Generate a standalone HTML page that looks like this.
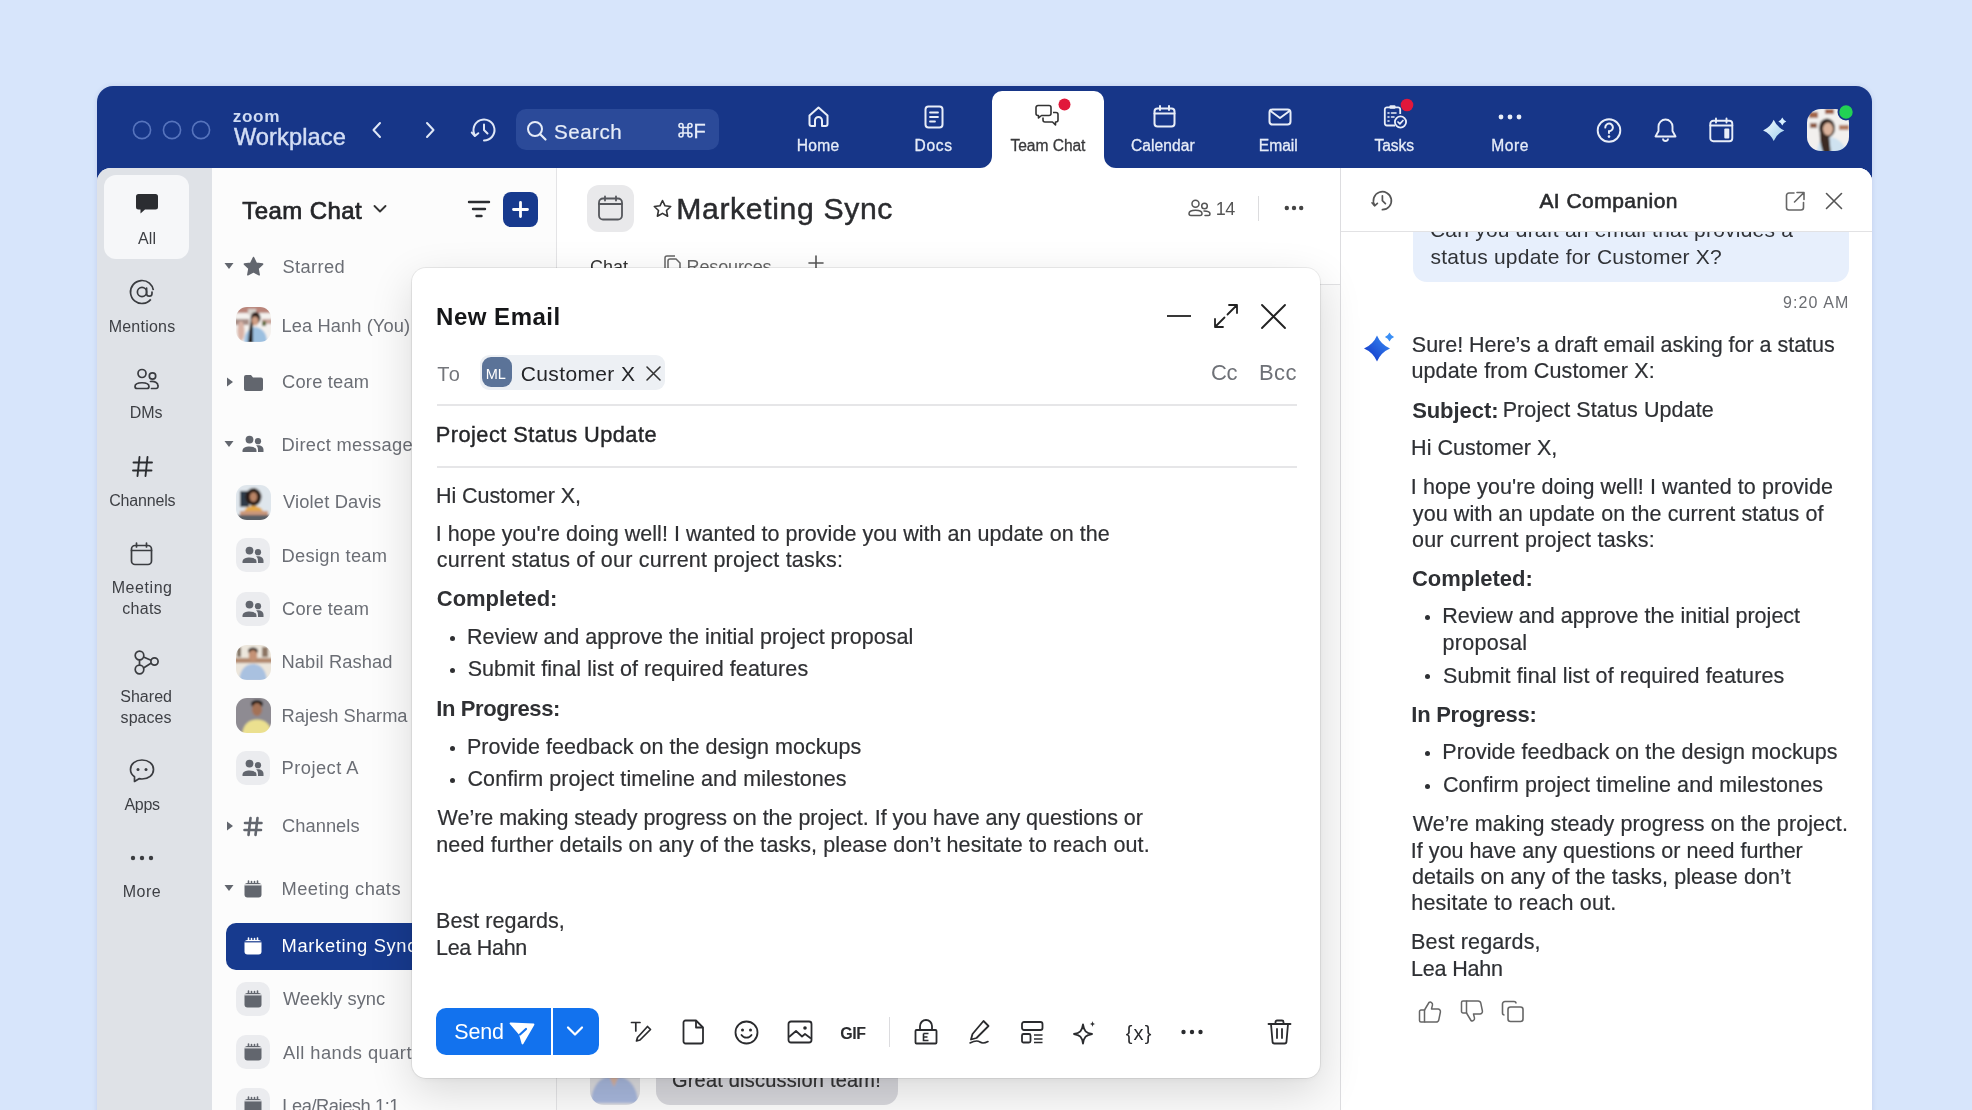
<!DOCTYPE html><html><head><meta charset="utf-8"><style>
html,body{margin:0;padding:0;}
body{width:1972px;height:1110px;overflow:hidden;position:relative;background:#d7e5fb;font-family:"Liberation Sans",sans-serif;}
.t{position:absolute;white-space:nowrap;line-height:1;-webkit-font-smoothing:antialiased;}
#root{position:absolute;left:0;top:0;width:1972px;height:1110px;will-change:transform;}
svg{display:block}
</style></head><body><div id="root">
<div style="position:absolute;left:97px;top:86px;width:1775px;height:1030px;background:#173688;border-radius:16px 16px 0 0;box-shadow:0 0 5px rgba(40,60,120,0.12);"></div>
<div style="position:absolute;left:97px;top:168px;width:1775px;height:950px;background:#ffffff;border-radius:14px 14px 0 0;overflow:hidden;"></div>
<svg style="position:absolute;left:132px;top:120px;overflow:visible;" width="20" height="20" viewBox="0 0 20 20" fill="none"><circle cx="10" cy="10" r="8.6" stroke="#5774bd" stroke-width="1.6"/></svg>
<svg style="position:absolute;left:161.5px;top:120px;overflow:visible;" width="20" height="20" viewBox="0 0 20 20" fill="none"><circle cx="10" cy="10" r="8.6" stroke="#5774bd" stroke-width="1.6"/></svg>
<svg style="position:absolute;left:191px;top:120px;overflow:visible;" width="20" height="20" viewBox="0 0 20 20" fill="none"><circle cx="10" cy="10" r="8.6" stroke="#5774bd" stroke-width="1.6"/></svg>
<div class="t" style="left:232.81px;top:107.64px;font-size:17.2px;color:#cfdbf3;font-weight:700;letter-spacing:0.609px;">zoom</div>
<div class="t" style="left:233.88px;top:125.72px;font-size:23.6px;color:#d3def5;letter-spacing:0.128px;-webkit-text-stroke:0.45px #d3def5;">Workplace</div>
<svg style="position:absolute;left:370px;top:121px;overflow:visible;" width="14" height="18" viewBox="0 0 14 18" fill="none"><path d="M10 2 L3.5 9 L10 16" stroke="#dfe7f6" stroke-width="2" stroke-linecap="round" stroke-linejoin="round"/></svg>
<svg style="position:absolute;left:423px;top:121px;overflow:visible;" width="14" height="18" viewBox="0 0 14 18" fill="none"><path d="M4 2 L10.5 9 L4 16" stroke="#dfe7f6" stroke-width="2" stroke-linecap="round" stroke-linejoin="round"/></svg>
<svg style="position:absolute;left:470px;top:117px;overflow:visible;" width="28" height="28" viewBox="0 0 28 28" fill="none"><path d="M4.9 18.25 A10.5 10.5 0 1 1 14 23.5" stroke="#dfe7f6" stroke-width="2" stroke-linecap="round"/><path d="M1.8 15.6 L4.9 19 L8.3 16.2" stroke="#dfe7f6" stroke-width="2" stroke-linecap="round" stroke-linejoin="round"/><path d="M14 7.5 V13 L17.5 16.5" stroke="#dfe7f6" stroke-width="2" stroke-linecap="round" stroke-linejoin="round"/></svg>
<div style="position:absolute;left:516px;top:109px;width:203px;height:41px;background:#2b4a99;border-radius:10px;"></div>
<svg style="position:absolute;left:526px;top:120px;overflow:visible;" width="22" height="22" viewBox="0 0 22 22" fill="none"><circle cx="9" cy="9" r="7" stroke="#e6ecf8" stroke-width="2"/><path d="M14 14 L19.5 19.5" stroke="#e6ecf8" stroke-width="2.2" stroke-linecap="round"/></svg>
<div class="t" style="left:554.07px;top:122.36px;font-size:20.6px;color:#e6ecf8;letter-spacing:0.473px;-webkit-text-stroke:0.2px #e6ecf8;">Search</div>
<svg style="position:absolute;left:677.5px;top:122px;overflow:visible;" width="15" height="17" viewBox="0 0 15 17" fill="none"><path d="M5 5.5 H10 V11 H5 Z M5 5.5 V3.5 A2 2 0 1 0 3 5.5 H5 M10 5.5 V3.5 A2 2 0 1 1 12 5.5 H10 M10 11 V13 A2 2 0 1 0 12 11 H10 M5 11 V13 A2 2 0 1 1 3 11 H5" stroke="#e6ecf8" stroke-width="1.6" fill="none"/></svg>
<div class="t" style="left:693.40px;top:121.07px;font-size:20px;color:#e6ecf8;-webkit-text-stroke:0.3px #e6ecf8;">F</div>
<svg style="position:absolute;left:980px;top:91px" width="136" height="78" viewBox="0 0 136 78"><path d="M0 77 A12 12 0 0 0 12 65 V10 A10 10 0 0 1 22 0 H114 A10 10 0 0 1 124 10 V65 A12 12 0 0 0 136 77 Z" fill="#ffffff"/></svg>
<svg style="position:absolute;left:807px;top:105px;overflow:visible;" width="23" height="23" viewBox="0 0 23 23" fill="none"><path d="M2.5 10.5 L11.5 2.5 L20.5 10.5 V19 A2 2 0 0 1 18.5 21 H15 V15.5 A3.5 3.5 0 0 0 8 15.5 V21 H4.5 A2 2 0 0 1 2.5 19 Z" stroke="#e9eef8" stroke-width="2" stroke-linejoin="round"/></svg>
<div class="t" style="left:796.75px;top:138.19px;font-size:15.6px;color:#e6ecf8;letter-spacing:0.299px;-webkit-text-stroke:0.3px #e6ecf8;">Home</div>
<svg style="position:absolute;left:924px;top:105px;overflow:visible;" width="21" height="24" viewBox="0 0 21 24" fill="none"><rect x="1.5" y="1.5" width="17" height="21" rx="3" stroke="#e9eef8" stroke-width="2"/><path d="M6 7.5 H14 M6 12 H14 M6 16.5 H11" stroke="#e9eef8" stroke-width="1.8" stroke-linecap="round"/></svg>
<div class="t" style="left:914.55px;top:138.19px;font-size:15.6px;color:#e6ecf8;letter-spacing:0.642px;-webkit-text-stroke:0.3px #e6ecf8;">Docs</div>
<svg style="position:absolute;left:1035px;top:104px;overflow:visible;" width="26" height="25" viewBox="0 0 26 25" fill="none"><path d="M3 1.5 H14 A2 2 0 0 1 16 3.5 V9.5 A2 2 0 0 1 14 11.5 H6.5 L3.5 14 V11.5 H3 A2 2 0 0 1 1 9.5 V3.5 A2 2 0 0 1 3 1.5 Z" stroke="#333" stroke-width="1.6" stroke-linejoin="round"/><path d="M18 8.5 H21 A2 2 0 0 1 23 10.5 V16 A2 2 0 0 1 21 18 H20.5 V21 L17.5 18 H10 A2 2 0 0 1 8 16 V13.5" stroke="#333" stroke-width="1.6" stroke-linejoin="round"/></svg>
<svg style="position:absolute;left:1058px;top:98px;overflow:visible;" width="13" height="13" viewBox="0 0 13 13" fill="none"><circle cx="6.5" cy="6.5" r="6" fill="#e1183b"/></svg>
<div class="t" style="left:1010.49px;top:138.19px;font-size:15.6px;color:#3a3a3c;letter-spacing:-0.054px;-webkit-text-stroke:0.3px #3a3a3c;">Team Chat</div>
<svg style="position:absolute;left:1153px;top:105px;overflow:visible;" width="23" height="23" viewBox="0 0 23 23" fill="none"><rect x="1.5" y="3.5" width="20" height="18" rx="3" stroke="#e9eef8" stroke-width="2"/><path d="M1.5 8.5 H21.5 M7 1 V5 M16 1 V5" stroke="#e9eef8" stroke-width="2" stroke-linecap="round"/></svg>
<div class="t" style="left:1130.92px;top:138.19px;font-size:15.6px;color:#e6ecf8;letter-spacing:0.068px;-webkit-text-stroke:0.3px #e6ecf8;">Calendar</div>
<svg style="position:absolute;left:1268px;top:108px;overflow:visible;" width="24" height="18" viewBox="0 0 24 18" fill="none"><rect x="1.5" y="1.5" width="21" height="15" rx="3" stroke="#e9eef8" stroke-width="2"/><path d="M2.5 3 L12 10 L21.5 3" stroke="#e9eef8" stroke-width="2" stroke-linejoin="round"/></svg>
<div class="t" style="left:1258.75px;top:138.19px;font-size:15.6px;color:#e6ecf8;-webkit-text-stroke:0.3px #e6ecf8;">Email</div>
<svg style="position:absolute;left:1383px;top:104px;overflow:visible;" width="25" height="26" viewBox="0 0 25 26" fill="none"><path d="M12 21.5 H4 A2.2 2.2 0 0 1 1.8 19.3 V5.5 A2.2 2.2 0 0 1 4 3.3 H15 A2.2 2.2 0 0 1 17.2 5.5 V10" stroke="#e9eef8" stroke-width="1.8"/><rect x="6.5" y="1.2" width="6" height="3.6" rx="1" fill="#e9eef8"/><path d="M5 9 H6 M8.5 9 H13 M5 13 H6 M8.5 13 H11 M5 17 H6" stroke="#e9eef8" stroke-width="1.6" stroke-linecap="round"/><circle cx="17.5" cy="18" r="5.6" stroke="#e9eef8" stroke-width="1.8"/><path d="M15 18 L16.9 19.8 L20 16.5" stroke="#e9eef8" stroke-width="1.7" stroke-linecap="round" stroke-linejoin="round"/></svg>
<svg style="position:absolute;left:1400px;top:98px;overflow:visible;" width="14" height="14" viewBox="0 0 14 14" fill="none"><circle cx="7" cy="7" r="6.3" fill="#e1183b"/></svg>
<div class="t" style="left:1374.49px;top:138.19px;font-size:15.6px;color:#e6ecf8;letter-spacing:-0.050px;-webkit-text-stroke:0.3px #e6ecf8;">Tasks</div>
<svg style="position:absolute;left:1498px;top:112px;overflow:visible;" width="24" height="10" viewBox="0 0 24 10" fill="none"><circle cx="3" cy="5" r="2.4" fill="#e9eef8"/><circle cx="12" cy="5" r="2.4" fill="#e9eef8"/><circle cx="21" cy="5" r="2.4" fill="#e9eef8"/></svg>
<div class="t" style="left:1491.15px;top:138.19px;font-size:15.6px;color:#e6ecf8;letter-spacing:0.594px;-webkit-text-stroke:0.3px #e6ecf8;">More</div>
<svg style="position:absolute;left:1596px;top:118px;overflow:visible;" width="26" height="26" viewBox="0 0 26 26" fill="none"><circle cx="13" cy="12.5" r="11.3" stroke="#e9eef8" stroke-width="1.9"/><path d="M9.3 9.6 A3.8 3.8 0 1 1 13 13.2 V15" stroke="#e9eef8" stroke-width="2" stroke-linecap="round"/><circle cx="13" cy="18.6" r="1.3" fill="#e9eef8"/></svg>
<svg style="position:absolute;left:1653px;top:117px;overflow:visible;" width="25" height="26" viewBox="0 0 25 26" fill="none"><path d="M12.5 2.5 A7 7 0 0 0 5.5 9.5 V14 L2.5 19.5 H22.5 L19.5 14 V9.5 A7 7 0 0 0 12.5 2.5 Z" stroke="#e9eef8" stroke-width="1.9" stroke-linejoin="round"/><path d="M10 21.5 A2.5 2.5 0 0 0 15 21.5" stroke="#e9eef8" stroke-width="1.9"/></svg>
<svg style="position:absolute;left:1709px;top:118px;overflow:visible;" width="25" height="25" viewBox="0 0 25 25" fill="none"><rect x="1.3" y="2.8" width="22" height="20.5" rx="3" stroke="#e9eef8" stroke-width="1.9"/><path d="M1.3 7.5 H23.3 M7 0.5 V4.5 M17.5 0.5 V4.5" stroke="#e9eef8" stroke-width="1.9" stroke-linecap="round"/><rect x="15.3" y="10.5" width="5" height="10" rx="1" fill="#e9eef8"/></svg>
<svg style="position:absolute;left:1760px;top:115px;overflow:visible;" width="30" height="30" viewBox="0 0 30 30" fill="none"><defs><linearGradient id="spg" x1="0" y1="0" x2="1" y2="1"><stop offset="0" stop-color="#f4fbff"/><stop offset="1" stop-color="#9fd0ee"/></linearGradient></defs><path d="M13.7 4.800000000000001 Q16.88 12.22 24.299999999999997 15.4 Q16.88 18.58 13.7 26.0 Q10.52 18.58 3.0999999999999996 15.4 Q10.52 12.22 13.7 4.800000000000001 Z" fill="url(#spg)"/><path d="M22.3 2.5999999999999996 Q23.50 5.40 26.3 6.6 Q23.50 7.80 22.3 10.6 Q21.10 7.80 18.3 6.6 Q21.10 5.40 22.3 2.5999999999999996 Z" fill="#d6efff"/></svg>
<svg style="position:absolute;left:1807px;top:109px" width="42" height="42" viewBox="0 0 42 42"><defs><clipPath id="hav"><rect width="42" height="42" rx="14"/></clipPath><filter id="havf"><feGaussianBlur stdDeviation="0.9"/></filter></defs><g clip-path="url(#hav)"><g filter="url(#havf)"><rect x="-3" y="-3" width="48" height="48" fill="#f2f0ee"/><rect x="2" y="3" width="9" height="6" fill="#a3654a"/><rect x="18" y="0" width="9" height="5" fill="#9c5d42"/><rect x="3" y="14" width="7" height="5" fill="#8d5a43"/><rect x="32" y="16" width="10" height="5" fill="#b07a5e"/><path d="M10 46 C10 33 14 29 22 28 C32 29 38 35 40 46 Z" fill="#cfe2f0"/><ellipse cx="20" cy="19" rx="8" ry="9.5" fill="#2a1d17"/><path d="M13 22 C12 32 15 40 17 46 L24 46 L22 26 Z" fill="#3a2a22"/><ellipse cx="21" cy="20" rx="5" ry="6.5" fill="#dcb49c"/></g></g></svg>
<svg style="position:absolute;left:1837px;top:103px;overflow:visible;" width="18" height="18" viewBox="0 0 18 18" fill="none"><circle cx="9" cy="9" r="7.6" fill="#22d254" stroke="#173688" stroke-width="1.8"/></svg>
<div style="position:absolute;left:97px;top:168px;width:115px;height:950px;background:#dfe2e7;border-top-left-radius:14px;"></div>
<div style="position:absolute;left:104px;top:175px;width:85px;height:84px;background:#f6f7f9;border-radius:12px;"></div>
<svg style="position:absolute;left:135px;top:193px;overflow:visible;" width="24" height="22" viewBox="0 0 24 22" fill="none"><path d="M3.5 1 H20.5 A2.5 2.5 0 0 1 23 3.5 V14 A2.5 2.5 0 0 1 20.5 16.5 H10 L5.5 20.5 V16.5 H3.5 A2.5 2.5 0 0 1 1 14 V3.5 A2.5 2.5 0 0 1 3.5 1 Z" fill="#2b2d31"/></svg>
<div class="t" style="left:138.00px;top:231.46px;font-size:16px;color:#3d3f44;letter-spacing:0.140px;">All</div>
<svg style="position:absolute;left:129px;top:279px;overflow:visible;" width="26" height="26" viewBox="0 0 26 26" fill="none"><circle cx="13" cy="13" r="11.5" stroke="#3a3c40" stroke-width="1.7" stroke-dasharray="62 12" transform="rotate(40 13 13)"/><circle cx="13" cy="13" r="4.6" stroke="#3a3c40" stroke-width="1.7"/><path d="M17.6 9 V14.5 A2.6 2.6 0 0 0 23 14.5 V13" stroke="#3a3c40" stroke-width="1.7" stroke-linecap="round"/></svg>
<div class="t" style="left:108.67px;top:318.66px;font-size:16px;color:#3d3f44;letter-spacing:0.226px;">Mentions</div>
<svg style="position:absolute;left:133px;top:368px;overflow:visible;" width="27" height="23" viewBox="0 0 27 23" fill="none"><circle cx="9" cy="5.5" r="4" stroke="#3a3c40" stroke-width="1.7"/><circle cx="19.5" cy="8" r="3.2" stroke="#3a3c40" stroke-width="1.7"/><path d="M2 18.5 C2 13.5 16 13.5 16 18.5 A2 2 0 0 1 14 20.5 H4 A2 2 0 0 1 2 18.5 Z" stroke="#3a3c40" stroke-width="1.7"/><path d="M17.5 13.5 C21.5 13 25 14.5 25 18 A2 2 0 0 1 23 20.5 H18.5" stroke="#3a3c40" stroke-width="1.7" stroke-linecap="round"/></svg>
<div class="t" style="left:129.72px;top:405.26px;font-size:16px;color:#3d3f44;letter-spacing:-0.020px;">DMs</div>
<svg style="position:absolute;left:131px;top:455px;overflow:visible;" width="23" height="23" viewBox="0 0 23 23" fill="none"><path d="M8.5 2 L6.5 21 M16.5 2 L14.5 21 M2.5 7.5 H21 M2 15.5 H20.5" stroke="#2b2d31" stroke-width="1.9" stroke-linecap="round"/></svg>
<div class="t" style="left:109.20px;top:492.66px;font-size:16px;color:#3d3f44;letter-spacing:-0.177px;">Channels</div>
<svg style="position:absolute;left:130px;top:542px;overflow:visible;" width="24" height="24" viewBox="0 0 24 24" fill="none"><rect x="1.5" y="3.5" width="20" height="19" rx="3.5" stroke="#3a3c40" stroke-width="1.7"/><path d="M1.5 8.5 H21.5 M6.5 1 V5 M16.5 1 V5" stroke="#3a3c40" stroke-width="1.7" stroke-linecap="round"/></svg>
<div class="t" style="left:111.72px;top:579.66px;font-size:16px;color:#3d3f44;letter-spacing:0.560px;">Meeting</div>
<div class="t" style="left:122.36px;top:600.66px;font-size:16px;color:#3d3f44;letter-spacing:0.240px;">chats</div>
<svg style="position:absolute;left:133px;top:649px;overflow:visible;" width="27" height="27" viewBox="0 0 27 27" fill="none"><circle cx="6.5" cy="6.5" r="4.3" stroke="#3a3c40" stroke-width="1.7"/><circle cx="6.5" cy="20.5" r="4.3" stroke="#3a3c40" stroke-width="1.7"/><circle cx="21.5" cy="12.5" r="3.6" stroke="#3a3c40" stroke-width="1.7"/><path d="M10.5 8 L18 11.3 M10.5 19 L18.3 14 M6.5 10.8 V16.2" stroke="#3a3c40" stroke-width="1.7"/></svg>
<div class="t" style="left:120.28px;top:688.66px;font-size:16px;color:#3d3f44;letter-spacing:0.016px;">Shared</div>
<div class="t" style="left:120.60px;top:709.66px;font-size:16px;color:#3d3f44;letter-spacing:0.048px;">spaces</div>
<svg style="position:absolute;left:129px;top:758px;overflow:visible;" width="26" height="26" viewBox="0 0 26 26" fill="none"><path d="M13 2 C6.5 2 1.5 6 1.5 11.5 C1.5 14.5 3 17 5.5 18.7 V23.5 L10 20.7 C11 20.9 12 21 13 21 C19.5 21 24.5 17 24.5 11.5 C24.5 6 19.5 2 13 2 Z" stroke="#3a3c40" stroke-width="1.7" stroke-linejoin="round"/><circle cx="9" cy="11.5" r="1.5" fill="#3a3c40"/><circle cx="17" cy="11.5" r="1.5" fill="#3a3c40"/></svg>
<div class="t" style="left:124.50px;top:797.06px;font-size:16px;color:#3d3f44;letter-spacing:-0.307px;">Apps</div>
<svg style="position:absolute;left:130px;top:853px;overflow:visible;" width="24" height="10" viewBox="0 0 24 10" fill="none"><circle cx="3" cy="5" r="2.2" fill="#3a3c40"/><circle cx="12" cy="5" r="2.2" fill="#3a3c40"/><circle cx="21" cy="5" r="2.2" fill="#3a3c40"/></svg>
<div class="t" style="left:122.72px;top:884.36px;font-size:16px;color:#3d3f44;letter-spacing:0.507px;">More</div>
<div style="position:absolute;left:212px;top:168px;width:345px;height:950px;background:#fcfcfc;"></div>
<div style="position:absolute;left:556px;top:168px;width:1px;height:950px;background:#e4e4e6;"></div>
<div class="t" style="left:242.22px;top:199.48px;font-size:24px;color:#242528;letter-spacing:0.420px;-webkit-text-stroke:0.7px #242528;">Team Chat</div>
<svg style="position:absolute;left:372px;top:203px;overflow:visible;" width="16" height="12" viewBox="0 0 16 12" fill="none"><path d="M2.5 3 L8 8.5 L13.5 3" stroke="#333" stroke-width="1.9" stroke-linecap="round" stroke-linejoin="round"/></svg>
<svg style="position:absolute;left:467px;top:199px;overflow:visible;" width="24" height="20" viewBox="0 0 24 20" fill="none"><path d="M2 3 H22 M6 10 H18 M9.5 17 H14.5" stroke="#2b2d31" stroke-width="2.4" stroke-linecap="round"/></svg>
<div style="position:absolute;left:503px;top:192px;width:35px;height:35px;background:#173a8e;border-radius:8px;"></div>
<svg style="position:absolute;left:510px;top:199px;overflow:visible;" width="21" height="21" viewBox="0 0 21 21" fill="none"><path d="M10.5 3.5 V17.5 M3.5 10.5 H17.5" stroke="#fff" stroke-width="2.8" stroke-linecap="round"/></svg>
<svg style="position:absolute;left:223px;top:261px;overflow:visible;" width="12" height="10" viewBox="0 0 12 10" fill="none"><path d="M1.5 2 H10.5 L6 8 Z" fill="#62666e"/></svg>
<svg style="position:absolute;left:243px;top:256px;overflow:visible;" width="21" height="21" viewBox="0 0 21 21" fill="none"><path d="M10.5 1.5 L13.3 7.3 L19.6 8.1 L15 12.5 L16.2 18.8 L10.5 15.8 L4.8 18.8 L6 12.5 L1.4 8.1 L7.7 7.3 Z" fill="#62666e" stroke="#62666e" stroke-width="1.5" stroke-linejoin="round"/></svg>
<div class="t" style="left:282.48px;top:258.01px;font-size:18.3px;color:#6b6e75;letter-spacing:0.383px;">Starred</div>
<svg style="position:absolute;left:236px;top:307px" width="35" height="35" viewBox="0 0 35 35"><defs><clipPath id="avc1"><rect width="35" height="35" rx="11"/></clipPath><filter id="avf1" x="-20%" y="-20%" width="140%" height="140%"><feGaussianBlur stdDeviation="0.9"/></filter></defs><g clip-path="url(#avc1)"><g filter="url(#avf1)"><rect x="-3" y="-3" width="41" height="41" fill="#f4f1ee"/><rect x="-3" y="-3" width="41" height="9" fill="#b9857a"/><rect x="12" y="2" width="8" height="6" fill="#d9d3cd"/><rect x="-3" y="12" width="16" height="6" fill="#a88f88"/><rect x="26" y="12" width="12" height="5" fill="#c9a59b"/><ellipse cx="5" cy="24" rx="3.5" ry="10" fill="#d9b3a6"/><ellipse cx="19.5" cy="11" rx="5" ry="6" fill="#2a1d18"/><ellipse cx="19" cy="14" rx="3.6" ry="4.6" fill="#cf9e84"/><path d="M8 36 C8 24 14 21 19 20 C25 21 31 24 31 36 Z" fill="#9cc0e0"/><path d="M15 12 C13 20 13 28 12 36 L17 36 L17 18 Z" fill="#1f1613"/><rect x="26" y="14" width="4" height="5" fill="#5d6b3a"/></g></g></svg>
<div class="t" style="left:281.54px;top:316.51px;font-size:18.3px;color:#6b6e75;letter-spacing:0.085px;">Lea Hanh (You)</div>
<svg style="position:absolute;left:225px;top:376px;overflow:visible;" width="10" height="12" viewBox="0 0 10 12" fill="none"><path d="M2 1.5 V10.5 L8 6 Z" fill="#62666e"/></svg>
<svg style="position:absolute;left:243px;top:374px;overflow:visible;" width="21" height="18" viewBox="0 0 21 18" fill="none"><path d="M1 3 A2 2 0 0 1 3 1 H8 L10 3.5 H18 A2 2 0 0 1 20 5.5 V15 A2 2 0 0 1 18 17 H3 A2 2 0 0 1 1 15 Z" fill="#62666e"/></svg>
<div class="t" style="left:282.08px;top:373.01px;font-size:18.3px;color:#6b6e75;letter-spacing:0.205px;">Core team</div>
<svg style="position:absolute;left:223px;top:439px;overflow:visible;" width="12" height="10" viewBox="0 0 12 10" fill="none"><path d="M1.5 2 H10.5 L6 8 Z" fill="#62666e"/></svg>
<svg style="position:absolute;left:242px;top:435px;overflow:visible;" width="22" height="18" viewBox="0 0 22 18" fill="none"><circle cx="7.5" cy="4.6" r="3.9" fill="#62666e"/><circle cx="16" cy="6.2" r="3.1" fill="#62666e"/><path d="M0.5 15.5 C0.5 10 14.5 10 14.5 15.5 V17 H0.5 Z" fill="#62666e"/><path d="M15.5 10.2 C19.5 10.2 21.5 12 21.5 15 V17 H16 V15.5 C16 13 15.5 11.5 14 10.6 Z" fill="#62666e"/></svg>
<div class="t" style="left:281.54px;top:436.01px;font-size:18.3px;color:#6b6e75;letter-spacing:0.316px;">Direct message</div>
<svg style="position:absolute;left:236px;top:485px" width="35" height="35" viewBox="0 0 35 35"><defs><clipPath id="avc2"><rect width="35" height="35" rx="11"/></clipPath><filter id="avf2" x="-20%" y="-20%" width="140%" height="140%"><feGaussianBlur stdDeviation="0.9"/></filter></defs><g clip-path="url(#avc2)"><g filter="url(#avf2)"><rect x="-3" y="-3" width="41" height="41" fill="#dfe6ec"/><rect x="4" y="6" width="9" height="16" fill="#2f3b48"/><ellipse cx="17.5" cy="12" rx="8" ry="9" fill="#2a1c16"/><ellipse cx="17.5" cy="12" rx="3.6" ry="4.8" fill="#b98466"/><path d="M5 36 C6 25 11 21 17.5 21 C24 21 29 25 30 36 Z" fill="#e5a744"/><rect x="4" y="26" width="28" height="4" fill="#c9967a"/><rect x="-3" y="30" width="41" height="8" fill="#5a5f66"/></g></g></svg>
<div class="t" style="left:282.91px;top:493.01px;font-size:18.3px;color:#6b6e75;letter-spacing:0.189px;">Violet Davis</div>
<div style="position:absolute;left:236px;top:538px;width:34px;height:34px;background:#ebecef;border-radius:10px;"></div>
<svg style="position:absolute;left:242px;top:546px;overflow:visible;" width="22" height="18" viewBox="0 0 22 18" fill="none"><circle cx="7.5" cy="4.6" r="3.9" fill="#62666e"/><circle cx="16" cy="6.2" r="3.1" fill="#62666e"/><path d="M0.5 15.5 C0.5 10 14.5 10 14.5 15.5 V17 H0.5 Z" fill="#62666e"/><path d="M15.5 10.2 C19.5 10.2 21.5 12 21.5 15 V17 H16 V15.5 C16 13 15.5 11.5 14 10.6 Z" fill="#62666e"/></svg>
<div class="t" style="left:281.54px;top:546.61px;font-size:18.3px;color:#6b6e75;letter-spacing:0.290px;">Design team</div>
<div style="position:absolute;left:236px;top:592px;width:34px;height:34px;background:#ebecef;border-radius:10px;"></div>
<svg style="position:absolute;left:242px;top:600px;overflow:visible;" width="22" height="18" viewBox="0 0 22 18" fill="none"><circle cx="7.5" cy="4.6" r="3.9" fill="#62666e"/><circle cx="16" cy="6.2" r="3.1" fill="#62666e"/><path d="M0.5 15.5 C0.5 10 14.5 10 14.5 15.5 V17 H0.5 Z" fill="#62666e"/><path d="M15.5 10.2 C19.5 10.2 21.5 12 21.5 15 V17 H16 V15.5 C16 13 15.5 11.5 14 10.6 Z" fill="#62666e"/></svg>
<div class="t" style="left:282.08px;top:600.01px;font-size:18.3px;color:#6b6e75;letter-spacing:0.205px;">Core team</div>
<svg style="position:absolute;left:236px;top:645px" width="35" height="35" viewBox="0 0 35 35"><defs><clipPath id="avc3"><rect width="35" height="35" rx="11"/></clipPath><filter id="avf3" x="-20%" y="-20%" width="140%" height="140%"><feGaussianBlur stdDeviation="0.9"/></filter></defs><g clip-path="url(#avc3)"><g filter="url(#avf3)"><rect x="-3" y="-3" width="41" height="41" fill="#ece6dc"/><rect x="-3" y="13" width="41" height="5" fill="#b38b70"/><rect x="1" y="2" width="4" height="10" fill="#7a6a5c"/><rect x="26" y="2" width="6" height="10" fill="#8c7564"/><ellipse cx="17" cy="6" rx="5" ry="3.5" fill="#2b1f18"/><ellipse cx="17" cy="10.5" rx="4.3" ry="5.5" fill="#c59274"/><path d="M3 36 C4 24 10 19 17 19 C24 19 30 24 31 36 Z" fill="#a9c1e0"/></g></g></svg>
<div class="t" style="left:281.54px;top:653.01px;font-size:18.3px;color:#6b6e75;letter-spacing:0.106px;">Nabil Rashad</div>
<svg style="position:absolute;left:236px;top:698px" width="35" height="35" viewBox="0 0 35 35"><defs><clipPath id="avc4"><rect width="35" height="35" rx="11"/></clipPath><filter id="avf4" x="-20%" y="-20%" width="140%" height="140%"><feGaussianBlur stdDeviation="0.9"/></filter></defs><g clip-path="url(#avc4)"><g filter="url(#avf4)"><rect x="-3" y="-3" width="41" height="41" fill="#8e8b92"/><ellipse cx="21" cy="6" rx="6" ry="4" fill="#1d1612"/><ellipse cx="21" cy="11.5" rx="5" ry="6.5" fill="#a47257"/><path d="M6 37 C7 26 13 21.5 21 21.5 C29 21.5 35 26 36 37 Z" fill="#ebe08f"/></g></g></svg>
<div class="t" style="left:281.54px;top:706.61px;font-size:18.3px;color:#6b6e75;">Rajesh Sharma</div>
<div style="position:absolute;left:236px;top:751px;width:34px;height:34px;background:#ebecef;border-radius:10px;"></div>
<svg style="position:absolute;left:242px;top:759px;overflow:visible;" width="22" height="18" viewBox="0 0 22 18" fill="none"><circle cx="7.5" cy="4.6" r="3.9" fill="#62666e"/><circle cx="16" cy="6.2" r="3.1" fill="#62666e"/><path d="M0.5 15.5 C0.5 10 14.5 10 14.5 15.5 V17 H0.5 Z" fill="#62666e"/><path d="M15.5 10.2 C19.5 10.2 21.5 12 21.5 15 V17 H16 V15.5 C16 13 15.5 11.5 14 10.6 Z" fill="#62666e"/></svg>
<div class="t" style="left:281.54px;top:759.01px;font-size:18.3px;color:#6b6e75;letter-spacing:0.483px;">Project A</div>
<svg style="position:absolute;left:225px;top:820px;overflow:visible;" width="10" height="12" viewBox="0 0 10 12" fill="none"><path d="M2 1.5 V10.5 L8 6 Z" fill="#62666e"/></svg>
<svg style="position:absolute;left:243px;top:816px;overflow:visible;" width="20" height="21" viewBox="0 0 20 21" fill="none"><path d="M7.5 2 L5.5 19 M14.5 2 L12.5 19 M2 7 H18.5 M1.5 14 H18" stroke="#62666e" stroke-width="2.6" stroke-linecap="round"/></svg>
<div class="t" style="left:282.08px;top:817.01px;font-size:18.3px;color:#6b6e75;letter-spacing:0.034px;">Channels</div>
<svg style="position:absolute;left:223px;top:883px;overflow:visible;" width="12" height="10" viewBox="0 0 12 10" fill="none"><path d="M1.5 2 H10.5 L6 8 Z" fill="#62666e"/></svg>
<svg style="position:absolute;left:244px;top:880px;overflow:visible;" width="18" height="18" viewBox="0 0 18 18" fill="none"><rect x="0.5" y="3" width="17" height="14.5" rx="3" fill="#62666e"/><path d="M4.5 1 V4.5 M13.5 1 V4.5 M7.5 1.5 V3.5 M10.5 1.5 V3.5" stroke="#62666e" stroke-width="1.6" stroke-linecap="round"/><rect x="0.5" y="4.2" width="17" height="1.2" fill="#fcfcfc"/></svg>
<div class="t" style="left:281.54px;top:880.01px;font-size:18.3px;color:#6b6e75;letter-spacing:0.432px;">Meeting chats</div>
<div style="position:absolute;left:226px;top:923px;width:340px;height:47px;background:#173a8e;border-radius:10px;"></div>
<svg style="position:absolute;left:244px;top:937px;overflow:visible;" width="18" height="18" viewBox="0 0 18 18" fill="none"><rect x="0.5" y="3" width="17" height="14.5" rx="3" fill="#ffffff"/><path d="M4.5 1 V4.5 M13.5 1 V4.5 M7.5 1.5 V3.5 M10.5 1.5 V3.5" stroke="#ffffff" stroke-width="1.6" stroke-linecap="round"/><rect x="0.5" y="4.2" width="17" height="1.2" fill="#173a8e"/></svg>
<div class="t" style="left:281.54px;top:937.31px;font-size:18.3px;color:#ffffff;letter-spacing:0.680px;">Marketing Sync</div>
<div style="position:absolute;left:236px;top:982px;width:34px;height:34px;background:#ebecef;border-radius:10px;"></div>
<svg style="position:absolute;left:244px;top:990px;overflow:visible;" width="18" height="18" viewBox="0 0 18 18" fill="none"><rect x="0.5" y="3" width="17" height="14.5" rx="3" fill="#62666e"/><path d="M4.5 1 V4.5 M13.5 1 V4.5 M7.5 1.5 V3.5 M10.5 1.5 V3.5" stroke="#62666e" stroke-width="1.6" stroke-linecap="round"/><rect x="0.5" y="4.2" width="17" height="1.2" fill="#ebecef"/></svg>
<div class="t" style="left:282.91px;top:990.01px;font-size:18.3px;color:#6b6e75;">Weekly sync</div>
<div style="position:absolute;left:236px;top:1035px;width:34px;height:34px;background:#ebecef;border-radius:10px;"></div>
<svg style="position:absolute;left:244px;top:1043px;overflow:visible;" width="18" height="18" viewBox="0 0 18 18" fill="none"><rect x="0.5" y="3" width="17" height="14.5" rx="3" fill="#62666e"/><path d="M4.5 1 V4.5 M13.5 1 V4.5 M7.5 1.5 V3.5 M10.5 1.5 V3.5" stroke="#62666e" stroke-width="1.6" stroke-linecap="round"/><rect x="0.5" y="4.2" width="17" height="1.2" fill="#ebecef"/></svg>
<div class="t" style="left:283.00px;top:1043.61px;font-size:18.3px;color:#6b6e75;letter-spacing:0.466px;">All hands quarterly</div>
<div style="position:absolute;left:236px;top:1088px;width:34px;height:34px;background:#ebecef;border-radius:10px;"></div>
<svg style="position:absolute;left:244px;top:1096px;overflow:visible;" width="18" height="18" viewBox="0 0 18 18" fill="none"><rect x="0.5" y="3" width="17" height="14.5" rx="3" fill="#62666e"/><path d="M4.5 1 V4.5 M13.5 1 V4.5 M7.5 1.5 V3.5 M10.5 1.5 V3.5" stroke="#62666e" stroke-width="1.6" stroke-linecap="round"/><rect x="0.5" y="4.2" width="17" height="1.2" fill="#ebecef"/></svg>
<div class="t" style="left:282.24px;top:1097.01px;font-size:18.3px;color:#6b6e75;letter-spacing:-0.445px;">Lea/Rajesh 1:1</div>
<div style="position:absolute;left:557px;top:168px;width:783px;height:950px;background:#ffffff;"></div>
<div style="position:absolute;left:557px;top:284px;width:783px;height:830px;background:#fbfbfb;"></div>
<div style="position:absolute;left:557px;top:284px;width:783px;height:1px;background:#e2e2e4;"></div>
<div style="position:absolute;left:587px;top:185px;width:47px;height:47px;background:#e9e9eb;border-radius:12px;"></div>
<svg style="position:absolute;left:597px;top:195px;overflow:visible;" width="27" height="27" viewBox="0 0 27 27" fill="none"><rect x="2" y="3.5" width="23" height="21" rx="4" stroke="#55575c" stroke-width="1.8"/><path d="M2 9 H25 M8 1.5 V5.5 M19 1.5 V5.5" stroke="#55575c" stroke-width="1.8" stroke-linecap="round"/></svg>
<svg style="position:absolute;left:653px;top:199px;overflow:visible;" width="19" height="19" viewBox="0 0 19 19" fill="none"><path d="M9.5 1.5 L12 6.8 L17.7 7.5 L13.5 11.5 L14.6 17.2 L9.5 14.4 L4.4 17.2 L5.5 11.5 L1.3 7.5 L7 6.8 Z" stroke="#333" stroke-width="1.6" stroke-linejoin="round"/></svg>
<div class="t" style="left:676.28px;top:193.54px;font-size:30.2px;color:#2a2b2e;letter-spacing:0.623px;-webkit-text-stroke:0.45px #2a2b2e;">Marketing Sync</div>
<svg style="position:absolute;left:1188px;top:199px;overflow:visible;" width="23" height="18" viewBox="0 0 23 18" fill="none"><circle cx="7.5" cy="4.8" r="3.5" stroke="#555" stroke-width="1.5"/><circle cx="16.5" cy="7" r="2.8" stroke="#555" stroke-width="1.5"/><path d="M1 14.5 C1 10 14 10 14 14.5 A2 2 0 0 1 12 16.5 H3 A2 2 0 0 1 1 14.5 Z" stroke="#555" stroke-width="1.5"/><path d="M16 12 C19.5 12 22 13 22 15 A1.5 1.5 0 0 1 20.5 16.5 H17" stroke="#555" stroke-width="1.5" stroke-linecap="round"/></svg>
<div class="t" style="left:1215.65px;top:200.46px;font-size:18px;color:#555;letter-spacing:-0.480px;">14</div>
<div style="position:absolute;left:1258px;top:196px;width:1px;height:25px;background:#dcdcde;"></div>
<svg style="position:absolute;left:1284px;top:203px;overflow:visible;" width="20" height="10" viewBox="0 0 20 10" fill="none"><circle cx="2.8" cy="5" r="2.2" fill="#444"/><circle cx="10" cy="5" r="2.2" fill="#444"/><circle cx="17.2" cy="5" r="2.2" fill="#444"/></svg>
<div class="t" style="left:590.10px;top:257.96px;font-size:18px;color:#333;">Chat</div>
<svg style="position:absolute;left:662px;top:253px;overflow:visible;" width="20" height="20" viewBox="0 0 20 20" fill="none"><path d="M3 17 V5 A2 2 0 0 1 5 3 H13" stroke="#666" stroke-width="1.5"/><path d="M6 17 V8 A2 2 0 0 1 8 6 H14 L18 10 V17" stroke="#666" stroke-width="1.5"/></svg>
<div class="t" style="left:686.56px;top:257.96px;font-size:18px;color:#666;letter-spacing:-0.121px;">Resources</div>
<svg style="position:absolute;left:807px;top:254px;overflow:visible;" width="18" height="18" viewBox="0 0 18 18" fill="none"><path d="M9 2 V16 M2 9 H16" stroke="#555" stroke-width="1.6" stroke-linecap="round"/></svg>
<svg style="position:absolute;left:590px;top:1063px" width="50" height="42" viewBox="0 0 50 42"><defs><clipPath id="avc5"><rect width="50" height="42" rx="14"/></clipPath><filter id="avf5" x="-20%" y="-20%" width="140%" height="140%"><feGaussianBlur stdDeviation="0.9"/></filter></defs><g clip-path="url(#avc5)"><g filter="url(#avf5)"><rect x="-3" y="-3" width="56" height="46" fill="#dcdcdf"/><rect x="0" y="0" width="18" height="7" fill="#b0a890"/><ellipse cx="24" cy="3" rx="7" ry="6" fill="#b88a70"/><path d="M1 40 C2 20 12 13 24 13 C36 13 47 20 48 40 Z" fill="#a7b7dc"/><path d="M19 13 L24 24 L29 13 Z" fill="#d6b3a0"/><path d="M40 0 L48 2 L46 9 Z" fill="#3a3a3e"/></g></g></svg>
<div style="position:absolute;left:656px;top:1055px;width:242px;height:50px;background:#d7d7dc;border-radius:14px;"></div>
<div class="t" style="left:672.00px;top:1070.27px;font-size:20px;color:#333;letter-spacing:0.200px;-webkit-text-stroke:0.2px #333;">Great discussion team!</div>
<div style="position:absolute;left:1340px;top:168px;width:1px;height:950px;background:#dddde0;"></div>
<div style="position:absolute;left:1341px;top:168px;width:531px;height:950px;background:#fff;border-top-right-radius:14px;overflow:hidden;"></div>
<div style="position:absolute;left:1413px;top:200px;width:436px;height:82px;background:#e7effc;border-radius:14px;"></div>
<div class="t" style="left:1429.95px;top:219.42px;font-size:21px;color:#303236;letter-spacing:0.220px;">Can you draft an email that provides a</div>
<div class="t" style="left:1430.47px;top:246.42px;font-size:21px;color:#303236;letter-spacing:0.232px;">status update for Customer X?</div>
<div style="position:absolute;left:1341px;top:168px;width:531px;height:63px;background:#ffffff;border-top-right-radius:14px;"></div>
<div style="position:absolute;left:1341px;top:231px;width:531px;height:1px;background:#e2e2e4;"></div>
<svg style="position:absolute;left:1370px;top:189px;overflow:visible;" width="24" height="24" viewBox="0 0 24 24" fill="none"><path d="M4.6 16.2 A9 9 0 1 1 12.4 20.7" stroke="#555" stroke-width="1.7" stroke-linecap="round"/><path d="M2 13.8 L4.6 16.8 L7.4 14.3" stroke="#555" stroke-width="1.7" stroke-linecap="round" stroke-linejoin="round"/><path d="M12.4 6.8 V11.7 L15.4 14.7" stroke="#555" stroke-width="1.7" stroke-linecap="round"/></svg>
<div class="t" style="left:1539.40px;top:190.22px;font-size:21px;color:#2a2b2e;letter-spacing:0.457px;-webkit-text-stroke:0.6px #2a2b2e;">AI Companion</div>
<svg style="position:absolute;left:1785px;top:191px;overflow:visible;" width="21" height="21" viewBox="0 0 21 21" fill="none"><path d="M9 2 H4 A2.5 2.5 0 0 0 1.5 4.5 V16.5 A2.5 2.5 0 0 0 4 19 H16 A2.5 2.5 0 0 0 18.5 16.5 V11.5" stroke="#666" stroke-width="1.6" stroke-linecap="round"/><path d="M12 1.5 H19 V8.5 M19 1.5 L9.5 11" stroke="#666" stroke-width="1.6" stroke-linecap="round" stroke-linejoin="round"/></svg>
<svg style="position:absolute;left:1825px;top:192px;overflow:visible;" width="18" height="18" viewBox="0 0 18 18" fill="none"><path d="M1.5 1.5 L16.5 16.5 M16.5 1.5 L1.5 16.5" stroke="#555" stroke-width="1.6" stroke-linecap="round"/></svg>
<div class="t" style="left:1782.88px;top:295.16px;font-size:16px;color:#6b6d72;letter-spacing:1.127px;">9:20 AM</div>
<svg style="position:absolute;left:1360px;top:330px;overflow:visible;" width="36" height="34" viewBox="0 0 36 34" fill="none"><defs><linearGradient id="aig" x1="0" y1="1" x2="1" y2="0"><stop offset="0" stop-color="#0f2fc4"/><stop offset="1" stop-color="#3a8ff5"/></linearGradient></defs><path d="M17 5.5 Q20.90 14.60 30 18.5 Q20.90 22.40 17 31.5 Q13.10 22.40 4 18.5 Q13.10 14.60 17 5.5 Z" fill="url(#aig)"/><path d="M29.5 2.4000000000000004 Q30.88 5.62 34.1 7 Q30.88 8.38 29.5 11.6 Q28.12 8.38 24.9 7 Q28.12 5.62 29.5 2.4000000000000004 Z" fill="#3a8ff5"/></svg>
<div class="t" style="left:1411.83px;top:334.70px;font-size:21.5px;color:#2e3034;letter-spacing:-0.021px;-webkit-text-stroke:0.2px #2e3034;">Sure! Here’s a draft email asking for a status</div>
<div class="t" style="left:1411.40px;top:361.00px;font-size:21.5px;color:#2e3034;letter-spacing:0.144px;-webkit-text-stroke:0.2px #2e3034;">update from Customer X:</div>
<div class="t" style="left:1412.14px;top:399.58px;font-size:22px;color:#2e3034;font-weight:700;letter-spacing:-0.063px;">Subject:</div>
<div class="t" style="left:1502.68px;top:400.00px;font-size:21.5px;color:#2e3034;letter-spacing:0.095px;-webkit-text-stroke:0.2px #2e3034;">Project Status Update</div>
<div class="t" style="left:1411.08px;top:438.00px;font-size:21.5px;color:#2e3034;letter-spacing:0.030px;-webkit-text-stroke:0.2px #2e3034;">Hi Customer X,</div>
<div class="t" style="left:1410.87px;top:477.00px;font-size:21.5px;color:#2e3034;letter-spacing:0.072px;-webkit-text-stroke:0.2px #2e3034;">I hope you&#x27;re doing well! I wanted to provide</div>
<div class="t" style="left:1412.80px;top:503.50px;font-size:21.5px;color:#2e3034;letter-spacing:0.103px;-webkit-text-stroke:0.2px #2e3034;">you with an update on the current status of</div>
<div class="t" style="left:1411.94px;top:530.00px;font-size:21.5px;color:#2e3034;letter-spacing:0.252px;-webkit-text-stroke:0.2px #2e3034;">our current project tasks:</div>
<div class="t" style="left:1411.92px;top:567.58px;font-size:22px;color:#2e3034;font-weight:700;letter-spacing:-0.014px;">Completed:</div>
<div style="position:absolute;left:1425.3px;top:614.5px;width:5px;height:5px;background:#2e3034;border-radius:3px;"></div>
<div class="t" style="left:1442.28px;top:606.30px;font-size:21.5px;color:#2e3034;letter-spacing:0.013px;-webkit-text-stroke:0.2px #2e3034;">Review and approve the initial project</div>
<div class="t" style="left:1442.60px;top:632.70px;font-size:21.5px;color:#2e3034;letter-spacing:0.263px;-webkit-text-stroke:0.2px #2e3034;">proposal</div>
<div style="position:absolute;left:1425.3px;top:674.0px;width:5px;height:5px;background:#2e3034;border-radius:3px;"></div>
<div class="t" style="left:1443.03px;top:665.70px;font-size:21.5px;color:#2e3034;letter-spacing:0.114px;-webkit-text-stroke:0.2px #2e3034;">Submit final list of required features</div>
<div class="t" style="left:1411.37px;top:703.58px;font-size:22px;color:#2e3034;font-weight:700;letter-spacing:-0.268px;">In Progress:</div>
<div style="position:absolute;left:1425.3px;top:750.5px;width:5px;height:5px;background:#2e3034;border-radius:3px;"></div>
<div class="t" style="left:1442.28px;top:742.00px;font-size:21.5px;color:#2e3034;letter-spacing:0.055px;-webkit-text-stroke:0.2px #2e3034;">Provide feedback on the design mockups</div>
<div style="position:absolute;left:1425.3px;top:783.5px;width:5px;height:5px;background:#2e3034;border-radius:3px;"></div>
<div class="t" style="left:1442.92px;top:775.00px;font-size:21.5px;color:#2e3034;letter-spacing:0.096px;-webkit-text-stroke:0.2px #2e3034;">Confirm project timeline and milestones</div>
<div class="t" style="left:1412.69px;top:814.00px;font-size:21.5px;color:#2e3034;letter-spacing:0.069px;-webkit-text-stroke:0.2px #2e3034;">We’re making steady progress on the project.</div>
<div class="t" style="left:1410.87px;top:840.50px;font-size:21.5px;color:#2e3034;letter-spacing:0.027px;-webkit-text-stroke:0.2px #2e3034;">If you have any questions or need further</div>
<div class="t" style="left:1411.94px;top:867.00px;font-size:21.5px;color:#2e3034;letter-spacing:0.058px;-webkit-text-stroke:0.2px #2e3034;">details on any of the tasks, please don’t</div>
<div class="t" style="left:1411.29px;top:893.30px;font-size:21.5px;color:#2e3034;letter-spacing:0.201px;-webkit-text-stroke:0.2px #2e3034;">hesitate to reach out.</div>
<div class="t" style="left:1411.08px;top:932.00px;font-size:21.5px;color:#2e3034;letter-spacing:0.136px;-webkit-text-stroke:0.2px #2e3034;">Best regards,</div>
<div class="t" style="left:1411.08px;top:958.50px;font-size:21.5px;color:#2e3034;letter-spacing:-0.185px;-webkit-text-stroke:0.2px #2e3034;">Lea Hahn</div>
<svg style="position:absolute;left:1418px;top:1000px;overflow:visible;" width="25" height="24" viewBox="0 0 25 24" fill="none"><path d="M6.5 10 V22 H3 A1.5 1.5 0 0 1 1.5 20.5 V11.5 A1.5 1.5 0 0 1 3 10 Z" stroke="#666" stroke-width="1.5"/><path d="M6.5 10 L11 2.5 A2.3 2.3 0 0 1 14.5 4.8 L13.5 9 H20 A2.5 2.5 0 0 1 22.4 12 L20.8 19.8 A2.8 2.8 0 0 1 18 22 H6.5" stroke="#666" stroke-width="1.5" stroke-linejoin="round"/></svg>
<svg style="position:absolute;left:1460px;top:999px;overflow:visible;" width="25" height="24" viewBox="0 0 25 24" fill="none"><path d="M6.5 14 V2 H3 A1.5 1.5 0 0 0 1.5 3.5 V12.5 A1.5 1.5 0 0 0 3 14 Z" stroke="#666" stroke-width="1.5"/><path d="M6.5 14 L11 21.5 A2.3 2.3 0 0 0 14.5 19.2 L13.5 15 H20 A2.5 2.5 0 0 0 22.4 12 L20.8 4.2 A2.8 2.8 0 0 0 18 2 H6.5" stroke="#666" stroke-width="1.5" stroke-linejoin="round"/></svg>
<svg style="position:absolute;left:1501px;top:1000px;overflow:visible;" width="24" height="23" viewBox="0 0 24 23" fill="none"><rect x="7" y="7" width="15" height="14.5" rx="2.5" stroke="#666" stroke-width="1.6"/><path d="M15 3.5 V3.5 A2 2 0 0 0 13 1.5 H4 A2.5 2.5 0 0 0 1.5 4 V13 A2 2 0 0 0 3.5 15" stroke="#666" stroke-width="1.6"/></svg>
<div style="position:absolute;left:412px;top:268px;width:908px;height:810px;background:#fff;border-radius:14px;box-shadow:0 14px 44px rgba(0,0,0,0.14),0 2px 6px rgba(0,0,0,0.04),0 0 0 1px rgba(0,0,0,0.07);"></div>
<div class="t" style="left:436.04px;top:305.38px;font-size:24px;color:#151618;font-weight:700;letter-spacing:0.515px;">New Email</div>
<svg style="position:absolute;left:1166px;top:310px;overflow:visible;" width="26" height="12" viewBox="0 0 26 12" fill="none"><path d="M1 6 H25" stroke="#222" stroke-width="1.8"/></svg>
<svg style="position:absolute;left:1212px;top:302px;overflow:visible;" width="28" height="28" viewBox="0 0 28 28" fill="none"><path d="M15.5 12.5 L25 3 M17 3 H25 V11 M12.5 15.5 L3 25 M3 17 V25 H11" stroke="#222" stroke-width="1.8" stroke-linecap="round" stroke-linejoin="round"/></svg>
<svg style="position:absolute;left:1260px;top:303px;overflow:visible;" width="27" height="27" viewBox="0 0 27 27" fill="none"><path d="M2 2 L25 25 M25 2 L2 25" stroke="#222" stroke-width="1.9" stroke-linecap="round"/></svg>
<div class="t" style="left:437.20px;top:363.87px;font-size:20px;color:#74767b;letter-spacing:1.500px;">To</div>
<div style="position:absolute;left:480px;top:355px;width:185px;height:35px;background:#edf0f4;border-radius:9px;"></div>
<div style="position:absolute;left:482px;top:357px;width:30px;height:30px;background:#5b7398;border-radius:9px;"></div>
<div class="t" style="left:485.84px;top:366.93px;font-size:14.5px;color:#ffffff;letter-spacing:-0.060px;">ML</div>
<div class="t" style="left:520.75px;top:363.02px;font-size:21px;color:#242528;letter-spacing:0.366px;">Customer X</div>
<svg style="position:absolute;left:645px;top:365px;overflow:visible;" width="17" height="17" viewBox="0 0 17 17" fill="none"><path d="M2 2 L15 15 M15 2 L2 15" stroke="#333" stroke-width="1.6" stroke-linecap="round"/></svg>
<div class="t" style="left:1210.90px;top:361.98px;font-size:22px;color:#6e7177;letter-spacing:-0.190px;">Cc</div>
<div class="t" style="left:1258.94px;top:361.98px;font-size:22px;color:#6e7177;letter-spacing:0.490px;">Bcc</div>
<div style="position:absolute;left:437px;top:404px;width:860px;height:2px;background:#e6e6e8;"></div>
<div class="t" style="left:435.86px;top:424.35px;font-size:21.8px;color:#252629;letter-spacing:0.431px;-webkit-text-stroke:0.4px #252629;">Project Status Update</div>
<div style="position:absolute;left:437px;top:466px;width:860px;height:2px;background:#e6e6e8;"></div>
<div class="t" style="left:435.98px;top:485.50px;font-size:21.5px;color:#2f3033;letter-spacing:-0.063px;-webkit-text-stroke:0.2px #2f3033;">Hi Customer X,</div>
<div class="t" style="left:435.76px;top:523.70px;font-size:21.5px;color:#2f3033;letter-spacing:0.040px;-webkit-text-stroke:0.2px #2f3033;">I hope you&#x27;re doing well! I wanted to provide you with an update on the</div>
<div class="t" style="left:436.84px;top:549.50px;font-size:21.5px;color:#2f3033;letter-spacing:0.217px;-webkit-text-stroke:0.2px #2f3033;">current status of our current project tasks:</div>
<div class="t" style="left:436.82px;top:587.98px;font-size:22px;color:#2f3033;font-weight:700;letter-spacing:-0.048px;">Completed:</div>
<div style="position:absolute;left:449.5px;top:635.5px;width:5px;height:5px;background:#2f3033;border-radius:3px;"></div>
<div class="t" style="left:466.88px;top:626.90px;font-size:21.5px;color:#2f3033;letter-spacing:0.011px;-webkit-text-stroke:0.2px #2f3033;">Review and approve the initial project proposal</div>
<div style="position:absolute;left:449.5px;top:668.0px;width:5px;height:5px;background:#2f3033;border-radius:3px;"></div>
<div class="t" style="left:467.63px;top:659.30px;font-size:21.5px;color:#2f3033;letter-spacing:0.095px;-webkit-text-stroke:0.2px #2f3033;">Submit final list of required features</div>
<div class="t" style="left:436.27px;top:697.68px;font-size:22px;color:#2f3033;font-weight:700;letter-spacing:-0.386px;">In Progress:</div>
<div style="position:absolute;left:449.5px;top:745.5px;width:5px;height:5px;background:#2f3033;border-radius:3px;"></div>
<div class="t" style="left:466.88px;top:736.70px;font-size:21.5px;color:#2f3033;letter-spacing:0.033px;-webkit-text-stroke:0.2px #2f3033;">Provide feedback on the design mockups</div>
<div style="position:absolute;left:449.5px;top:777.8px;width:5px;height:5px;background:#2f3033;border-radius:3px;"></div>
<div class="t" style="left:467.53px;top:768.90px;font-size:21.5px;color:#2f3033;letter-spacing:0.070px;-webkit-text-stroke:0.2px #2f3033;">Confirm project timeline and milestones</div>
<div class="t" style="left:437.59px;top:807.70px;font-size:21.5px;color:#2f3033;letter-spacing:-0.024px;-webkit-text-stroke:0.2px #2f3033;">We’re making steady progress on the project. If you have any questions or</div>
<div class="t" style="left:436.30px;top:835.00px;font-size:21.5px;color:#2f3033;letter-spacing:0.107px;-webkit-text-stroke:0.2px #2f3033;">need further details on any of the tasks, please don’t hesitate to reach out.</div>
<div class="t" style="left:435.98px;top:911.10px;font-size:21.5px;color:#2f3033;letter-spacing:0.077px;-webkit-text-stroke:0.2px #2f3033;">Best regards,</div>
<div class="t" style="left:435.98px;top:937.80px;font-size:21.5px;color:#2f3033;letter-spacing:-0.270px;-webkit-text-stroke:0.2px #2f3033;">Lea Hahn</div>
<div style="position:absolute;left:436px;top:1008px;width:163px;height:47px;background:#1272ee;border-radius:10px;"></div>
<div style="position:absolute;left:551px;top:1008px;width:2px;height:47px;background:#ffffff;"></div>
<div class="t" style="left:454.33px;top:1021.70px;font-size:21.5px;color:#ffffff;letter-spacing:-0.182px;">Send</div>
<svg style="position:absolute;left:509px;top:1022px;overflow:visible;" width="26" height="23" viewBox="0 0 26 23" fill="none"><path d="M1.5 1.5 L24.5 2.5 L13.5 21.5 L11 12.5 Z" fill="#fff" stroke="#fff" stroke-width="1.8" stroke-linejoin="round"/><path d="M11 12.5 L17 7" stroke="#1272ee" stroke-width="2.2" stroke-linecap="round"/></svg>
<svg style="position:absolute;left:566px;top:1025px;overflow:visible;" width="18" height="12" viewBox="0 0 18 12" fill="none"><path d="M2 2.5 L9 9.5 L16 2.5" stroke="#fff" stroke-width="2.2" stroke-linecap="round" stroke-linejoin="round"/></svg>
<svg style="position:absolute;left:630px;top:1020px;overflow:visible;" width="22" height="24" viewBox="0 0 22 24" fill="none"><path d="M1.5 2.5 H10 M5.8 2.5 V11" stroke="#2a2b2e" stroke-width="1.7" stroke-linecap="round"/><path d="M17.5 6.5 L20.5 9.5 L10 20 L6.5 21 L7.5 17.5 Z" stroke="#2a2b2e" stroke-width="1.7" stroke-linejoin="round"/></svg>
<svg style="position:absolute;left:682px;top:1019px;overflow:visible;" width="23" height="26" viewBox="0 0 23 26" fill="none"><path d="M3.5 1.5 H14 L21 8.5 V22.5 A2 2 0 0 1 19 24.5 H3.5 A2 2 0 0 1 1.5 22.5 V3.5 A2 2 0 0 1 3.5 1.5 Z" stroke="#2a2b2e" stroke-width="1.8" stroke-linejoin="round"/><path d="M14 1.5 V8.5 H21" stroke="#2a2b2e" stroke-width="1.8" stroke-linejoin="round"/></svg>
<svg style="position:absolute;left:734px;top:1020px;overflow:visible;" width="25" height="25" viewBox="0 0 25 25" fill="none"><circle cx="12.5" cy="12.5" r="11" stroke="#2a2b2e" stroke-width="1.8"/><circle cx="8.5" cy="10" r="1.5" fill="#2a2b2e"/><circle cx="16.5" cy="10" r="1.5" fill="#2a2b2e"/><path d="M7.5 15 A6 6 0 0 0 17.5 15" stroke="#2a2b2e" stroke-width="1.8" stroke-linecap="round"/></svg>
<svg style="position:absolute;left:787px;top:1020px;overflow:visible;" width="26" height="24" viewBox="0 0 26 24" fill="none"><rect x="1.5" y="1.5" width="23" height="21" rx="2.5" stroke="#2a2b2e" stroke-width="1.8"/><path d="M2 17 L9 11 L15 16.5 L18 14 L24 18.5" stroke="#2a2b2e" stroke-width="1.8" stroke-linejoin="round"/><circle cx="18" cy="8" r="1.8" fill="#2a2b2e"/></svg>
<div class="t" style="left:840.36px;top:1025.66px;font-size:16px;color:#2a2b2e;font-weight:700;letter-spacing:-0.470px;font-family:"Liberation Mono",monospace;">GIF</div>
<div style="position:absolute;left:889px;top:1017px;width:1px;height:30px;background:#dcdcdf;"></div>
<svg style="position:absolute;left:914px;top:1019px;overflow:visible;" width="24" height="26" viewBox="0 0 24 26" fill="none"><path d="M6 11 V7 A6 6 0 0 1 18 7 V11" stroke="#2a2b2e" stroke-width="1.8"/><rect x="1.5" y="11" width="21" height="13.5" rx="1" stroke="#2a2b2e" stroke-width="1.8"/><path d="M9.5 14.5 H14.5 M9.5 14.5 V21.5 H14.5 M9.5 18 H13.5" stroke="#2a2b2e" stroke-width="1.6"/></svg>
<svg style="position:absolute;left:968px;top:1019px;overflow:visible;" width="23" height="26" viewBox="0 0 23 26" fill="none"><path d="M15.5 2 L20.5 7 L8.5 19 L3 20.5 L4.5 15 Z" stroke="#2a2b2e" stroke-width="1.8" stroke-linejoin="round"/><path d="M2 24 C6 22 9 21 12 23 C14 24.5 17 24 20 22.5" stroke="#2a2b2e" stroke-width="1.6" stroke-linecap="round"/></svg>
<svg style="position:absolute;left:1021px;top:1021px;overflow:visible;" width="23" height="23" viewBox="0 0 23 23" fill="none"><rect x="1" y="1" width="20.5" height="8" rx="2" stroke="#2a2b2e" stroke-width="1.8"/><rect x="1" y="13" width="8.5" height="8.5" rx="1.5" stroke="#2a2b2e" stroke-width="1.8"/><path d="M13 14 H21.5 M13 18 H21.5 M13 21.5 H21.5" stroke="#2a2b2e" stroke-width="1.7"/></svg>
<svg style="position:absolute;left:1073px;top:1020px;overflow:visible;" width="25" height="24" viewBox="0 0 25 24" fill="none"><path d="M10 4.5 C11 11 13 13 19 14 C13 15 11 17 10 23.5 C9 17 7 15 1 14 C7 13 9 11 10 4.5 Z" stroke="#2a2b2e" stroke-width="1.8" stroke-linejoin="round"/><path d="M19.5 1 C19.8 3 20.5 3.7 22.5 4 C20.5 4.3 19.8 5 19.5 7 C19.2 5 18.5 4.3 16.5 4 C18.5 3.7 19.2 3 19.5 1 Z" fill="#2a2b2e"/></svg>
<div class="t" style="left:1125.70px;top:1023.27px;font-size:20px;color:#2a2b2e;letter-spacing:1.150px;">{x}</div>
<svg style="position:absolute;left:1181px;top:1027px;overflow:visible;" width="22" height="10" viewBox="0 0 22 10" fill="none"><circle cx="2.5" cy="5" r="2.2" fill="#2a2b2e"/><circle cx="11" cy="5" r="2.2" fill="#2a2b2e"/><circle cx="19.5" cy="5" r="2.2" fill="#2a2b2e"/></svg>
<svg style="position:absolute;left:1267px;top:1019px;overflow:visible;" width="25" height="26" viewBox="0 0 25 26" fill="none"><path d="M1.5 5 H23.5" stroke="#2a2b2e" stroke-width="1.8" stroke-linecap="round"/><path d="M8.5 5 V3 A1.5 1.5 0 0 1 10 1.5 H15 A1.5 1.5 0 0 1 16.5 3 V5" stroke="#2a2b2e" stroke-width="1.8"/><path d="M4 5 L5.5 22.5 A2 2 0 0 0 7.5 24.5 H17.5 A2 2 0 0 0 19.5 22.5 L21 5" stroke="#2a2b2e" stroke-width="1.8" stroke-linejoin="round"/><path d="M10 10 V19 M15 10 V19" stroke="#2a2b2e" stroke-width="1.8" stroke-linecap="round"/></svg>
</div></body></html>
